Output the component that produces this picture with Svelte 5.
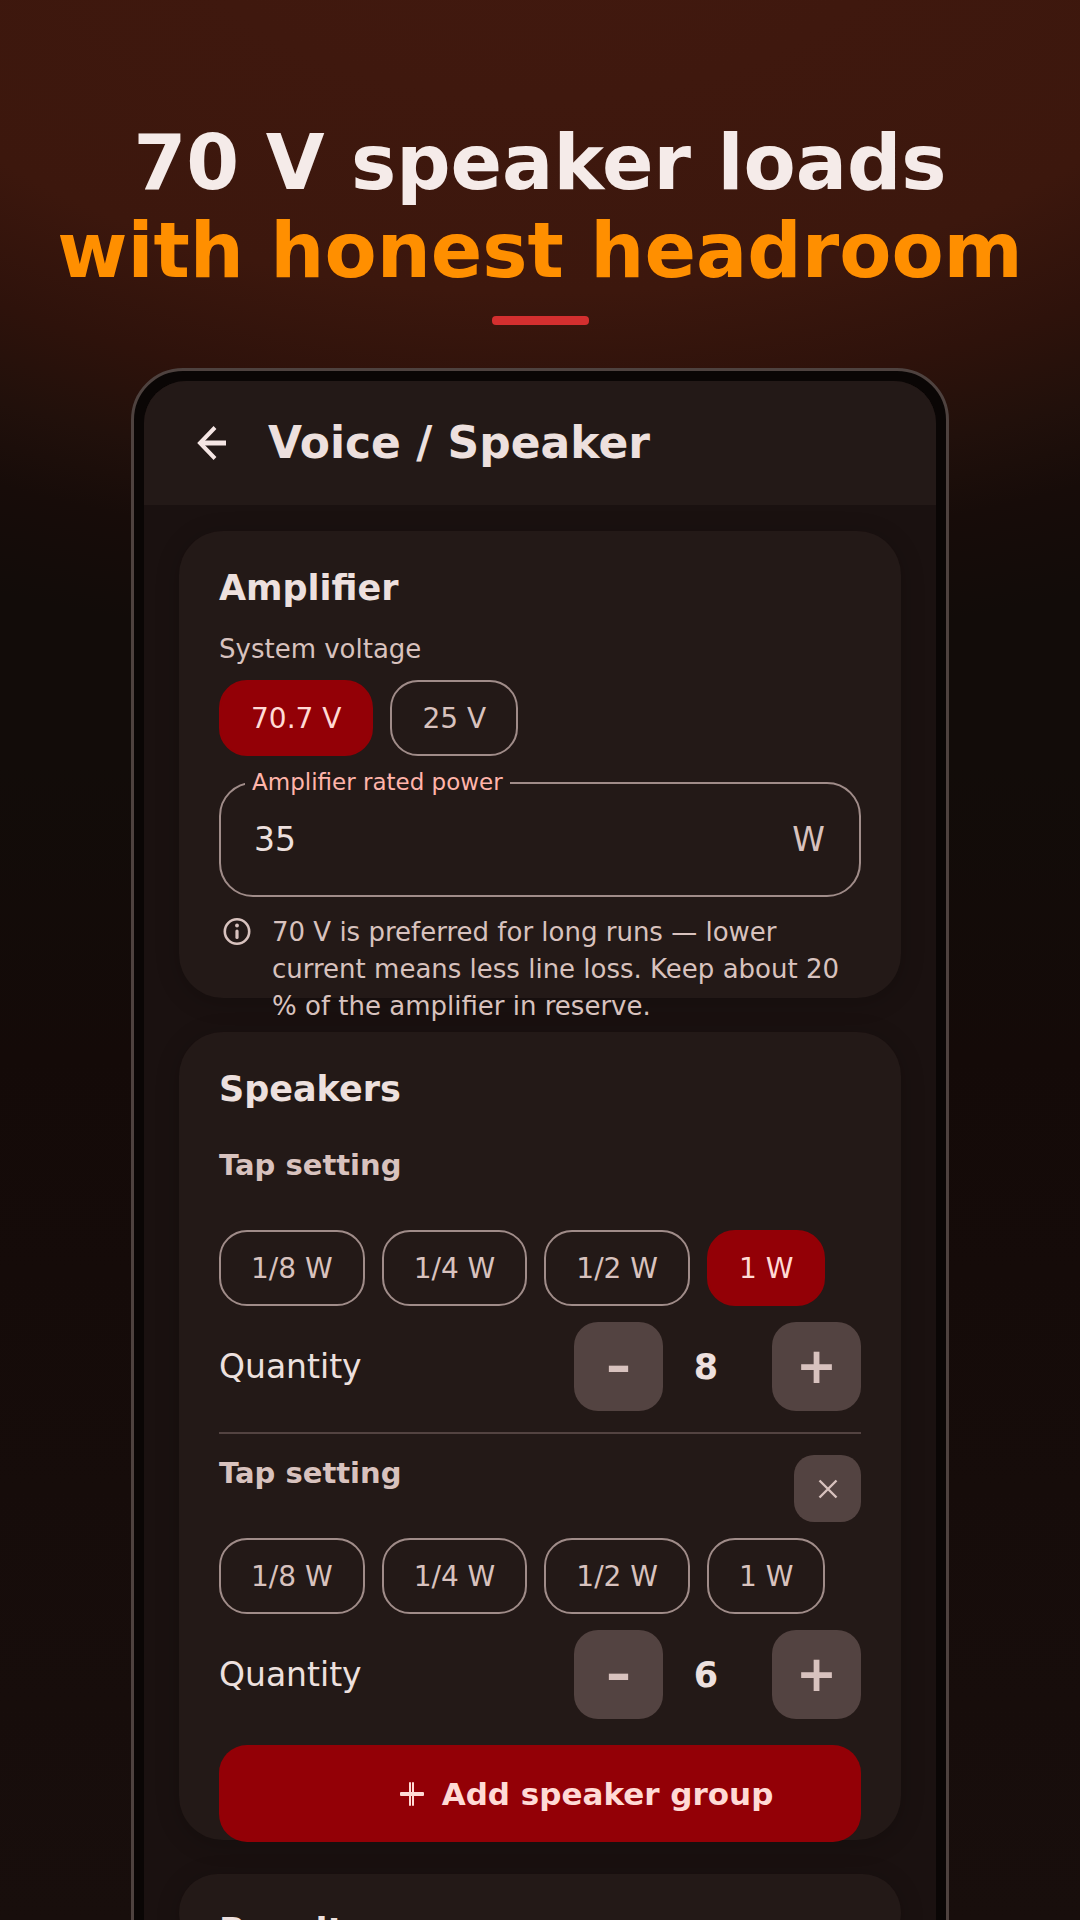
<script lang="ts">
  const voltages = ['70.7 V', '25 V'];
  const taps = ['1/8 W', '1/4 W', '1/2 W', '1 W'];

  let voltage = $state('70.7 V');
  let power = $state('35');
  let nextId = 3;
  let groups = $state([
    { id: 1, tap: '1 W', quantity: 8 },
    { id: 2, tap: '', quantity: 6 },
  ]);

  function addGroup() {
    groups.push({ id: nextId++, tap: '', quantity: 1 });
  }

  function removeGroup(id: number) {
    groups = groups.filter((g) => g.id !== id);
  }
</script>

<main class="stage">
  <h1 class="headline">
    <span>70 V speaker loads</span>
    <span class="accent">with honest headroom</span>
  </h1>
  <div class="rule"></div>

  <div class="phone">
    <div class="screen">
      <header class="app-bar">
        <button class="back" aria-label="Back">
          <svg viewBox="0 0 36 36" width="36" height="36" fill="none" stroke="currentColor">
            <path d="M32 18H6" stroke-width="5" />
            <path d="M21 2.500L6 18L21 33.500" stroke-width="4" />
          </svg>
        </button>
        <h2 class="app-title">Voice / Speaker</h2>
      </header>

      <div class="content">
        <section class="card">
          <h3 class="card-title">Amplifier</h3>
          <p class="label">System voltage</p>
          <div class="chips">
            {#each voltages as v}
              <button class="chip" class:selected={voltage === v} aria-pressed={voltage === v} onclick={() => (voltage = v)}>{v}</button>
            {/each}
          </div>

          <div class="field">
            <label class="field-label" for="power">Amplifier rated power</label>
            <input id="power" type="text" inputmode="numeric" bind:value={power} />
            <span class="unit">W</span>
          </div>

          <div class="note">
            <svg class="note-icon" viewBox="0 0 36 36" width="36" height="36" aria-hidden="true">
              <circle cx="18" cy="17.500" r="12.200" fill="none" stroke="currentColor" stroke-width="2.600" />
              <circle cx="18" cy="11.500" r="1.900" fill="currentColor" />
              <path d="M18 17V23.500" stroke="currentColor" stroke-width="3.200" stroke-linecap="round" />
            </svg>
            <p>70 V is preferred for long runs — lower current means less line loss. Keep about 20 % of the amplifier in reserve.</p>
          </div>
        </section>

        <section class="card">
          <h3 class="card-title">Speakers</h3>
          <div class="groups">
            {#each groups as group, i (group.id)}
              <div class="group">
                <div class="group-head">
                  <h4>Tap setting</h4>
                  {#if i > 0}
                    <button class="remove" aria-label="Remove group" onclick={() => removeGroup(group.id)}>
                      <svg viewBox="0 0 20 20" width="20" height="20" stroke="currentColor" stroke-width="2.400">
                        <path d="M1.500 1.500L18.500 18.500M18.500 1.500L1.500 18.500" />
                      </svg>
                    </button>
                  {/if}
                </div>
                <div class="chips">
                  {#each taps as tap}
                    <button class="chip" class:selected={group.tap === tap} aria-pressed={group.tap === tap} onclick={() => (group.tap = tap)}>{tap}</button>
                  {/each}
                </div>
                <div class="quantity">
                  <span class="quantity-label">Quantity</span>
                  <button class="step" aria-label="Decrease quantity" onclick={() => (group.quantity = Math.max(1, group.quantity - 1))}>–</button>
                  <output>{group.quantity}</output>
                  <button class="step" aria-label="Increase quantity" onclick={() => (group.quantity += 1)}>+</button>
                </div>
              </div>
            {/each}
          </div>
          <button class="add" onclick={addGroup}>
            <svg viewBox="0 0 26 26" width="26" height="26" fill="currentColor" aria-hidden="true">
              <rect x="1" y="11" width="24" height="4" rx="1" />
              <rect x="10" y="1" width="2" height="24" rx="1" />
              <rect x="13" y="1" width="2" height="24" rx="1" />
            </svg>
            Add speaker group
          </button>
        </section>

        <section class="card">
          <h3 class="card-title">Results</h3>
        </section>
      </div>
    </div>
  </div>
</main>

<style>
  :global(body) {
    margin: 0;
    background: #140b09;
  }

  .stage {
    box-sizing: border-box;
    display: flex;
    flex-direction: column;
    align-items: center;
    height: 100vh;
    overflow: hidden;
    padding-top: 119px;
    font-family: 'DejaVu Sans', sans-serif;
    color: #ede0de;
    background:
      radial-gradient(ellipse 1500px 820px at 50% -100px, #42190f 0%, #3c170d 48%, #2e120b 61%, #21100b 71%, #170c09 80%, rgba(18, 12, 9, 0) 92%),
      linear-gradient(#120c09 0%, #120c09 40%, #140a08 55%, #180e0c 100%);
  }

  h1, h2, h3, h4, p {
    margin: 0;
  }

  button {
    font-family: inherit;
    border: none;
    padding: 0;
    cursor: pointer;
  }

  .headline {
    flex: none;
    font-size: 76px;
    line-height: 88px;
    font-weight: 700;
    text-align: center;
    white-space: nowrap;
    color: #f5ebe9;
  }

  .headline span {
    display: block;
  }

  .headline .accent {
    color: #ff8f00;
  }

  .rule {
    flex: none;
    width: 97px;
    height: 9px;
    margin: 21px 0 43px;
    border-radius: 4px;
    background: #d32f2f;
  }

  .phone {
    box-sizing: border-box;
    flex: none;
    width: calc(100% - 262px);
    padding: 10px;
    border: 3px solid #4e423f;
    border-radius: 52px;
    background: #0a0605;
  }

  .screen {
    overflow: hidden;
    border-radius: 42px;
    background: #1a1110;
  }

  .app-bar {
    display: flex;
    align-items: center;
    gap: 38px;
    height: 124px;
    padding: 0 50px;
    background: #231917;
  }

  .back {
    display: flex;
    background: none;
    color: #f5e6e4;
  }

  .app-title {
    font-size: 44px;
    line-height: 52px;
    font-weight: 700;
  }

  .content {
    display: flex;
    flex-direction: column;
    gap: 34px;
    padding: 26px 35px;
  }

  .card {
    padding: 37px 40px 0;
    border-radius: 44px;
    background: #231917;
    box-shadow: 0 4px 24px rgba(0, 0, 0, 0.2);
  }

  .card-title {
    font-size: 35px;
    line-height: 40px;
    font-weight: 700;
  }

  .label {
    margin-top: 27px;
    font-size: 26px;
    line-height: 29px;
    color: #d8c2be;
  }

  .chips {
    display: flex;
    gap: 17px;
    margin-top: 16px;
  }

  .chip {
    height: 76px;
    padding: 0 30px;
    border: 2px solid #a08c89;
    border-radius: 28px;
    background: none;
    font-size: 28px;
    color: #d8c2be;
  }

  .chip.selected {
    border-color: #930006;
    background: #930006;
    color: #ffdad5;
  }

  .field {
    position: relative;
    display: flex;
    align-items: center;
    margin-top: 26px;
    padding: 0 34px 0 33px;
    height: 111px;
    border: 2px solid #a08c89;
    border-radius: 34px;
  }

  .field-label {
    position: absolute;
    top: -17px;
    left: 24px;
    padding: 0 7px;
    background: #231917;
    font-size: 23px;
    line-height: 30px;
    color: #ffb4aa;
  }

  .field input {
    flex: 1;
    min-width: 0;
    padding: 0;
    border: none;
    outline: none;
    background: none;
    font-family: inherit;
    font-size: 33px;
    color: #ede0de;
  }

  .unit {
    font-size: 33px;
    color: #d8c2be;
  }

  /* the note hangs over the lower edge of its card */
  .note {
    display: flex;
    align-items: flex-start;
    gap: 17px;
    margin: 17px 0 -27px;
    font-size: 26px;
    line-height: 37px;
    color: #d8c2be;
  }

  .note-icon {
    flex: none;
  }

  .groups {
    margin-top: 38px;
  }

  .group + .group {
    margin-top: 21px;
    padding-top: 21px;
    border-top: 2px solid #534341;
  }

  .group-head {
    display: flex;
    justify-content: space-between;
    height: 67px;
  }

  .group-head h4 {
    font-size: 29px;
    line-height: 36px;
    font-weight: 700;
    color: #d8c2be;
  }

  .remove {
    display: flex;
    align-items: center;
    justify-content: center;
    width: 67px;
    height: 67px;
    border-radius: 20px;
    background: #534341;
    color: #d8c2be;
  }

  .quantity {
    display: flex;
    align-items: center;
    margin-top: 16px;
  }

  .quantity-label {
    flex: 1;
    font-size: 33px;
  }

  .step {
    width: 89px;
    height: 89px;
    border-radius: 24px;
    background: #534341;
    font-size: 49px;
    font-weight: 700;
    color: #d8c2be;
  }

  .quantity output {
    width: 86px;
    margin-right: 23px;
    font-size: 35px;
    font-weight: 700;
    text-align: center;
  }

  /* a little taller than the space left in the card */
  .add {
    display: flex;
    align-items: center;
    justify-content: center;
    gap: 17px;
    width: 100%;
    height: 97px;
    margin: 26px 0 -2px;
    padding-left: 92px;
    border-radius: 28px;
    background: #930006;
    font-size: 31px;
    font-weight: 700;
    color: #ffdad5;
  }
</style>
